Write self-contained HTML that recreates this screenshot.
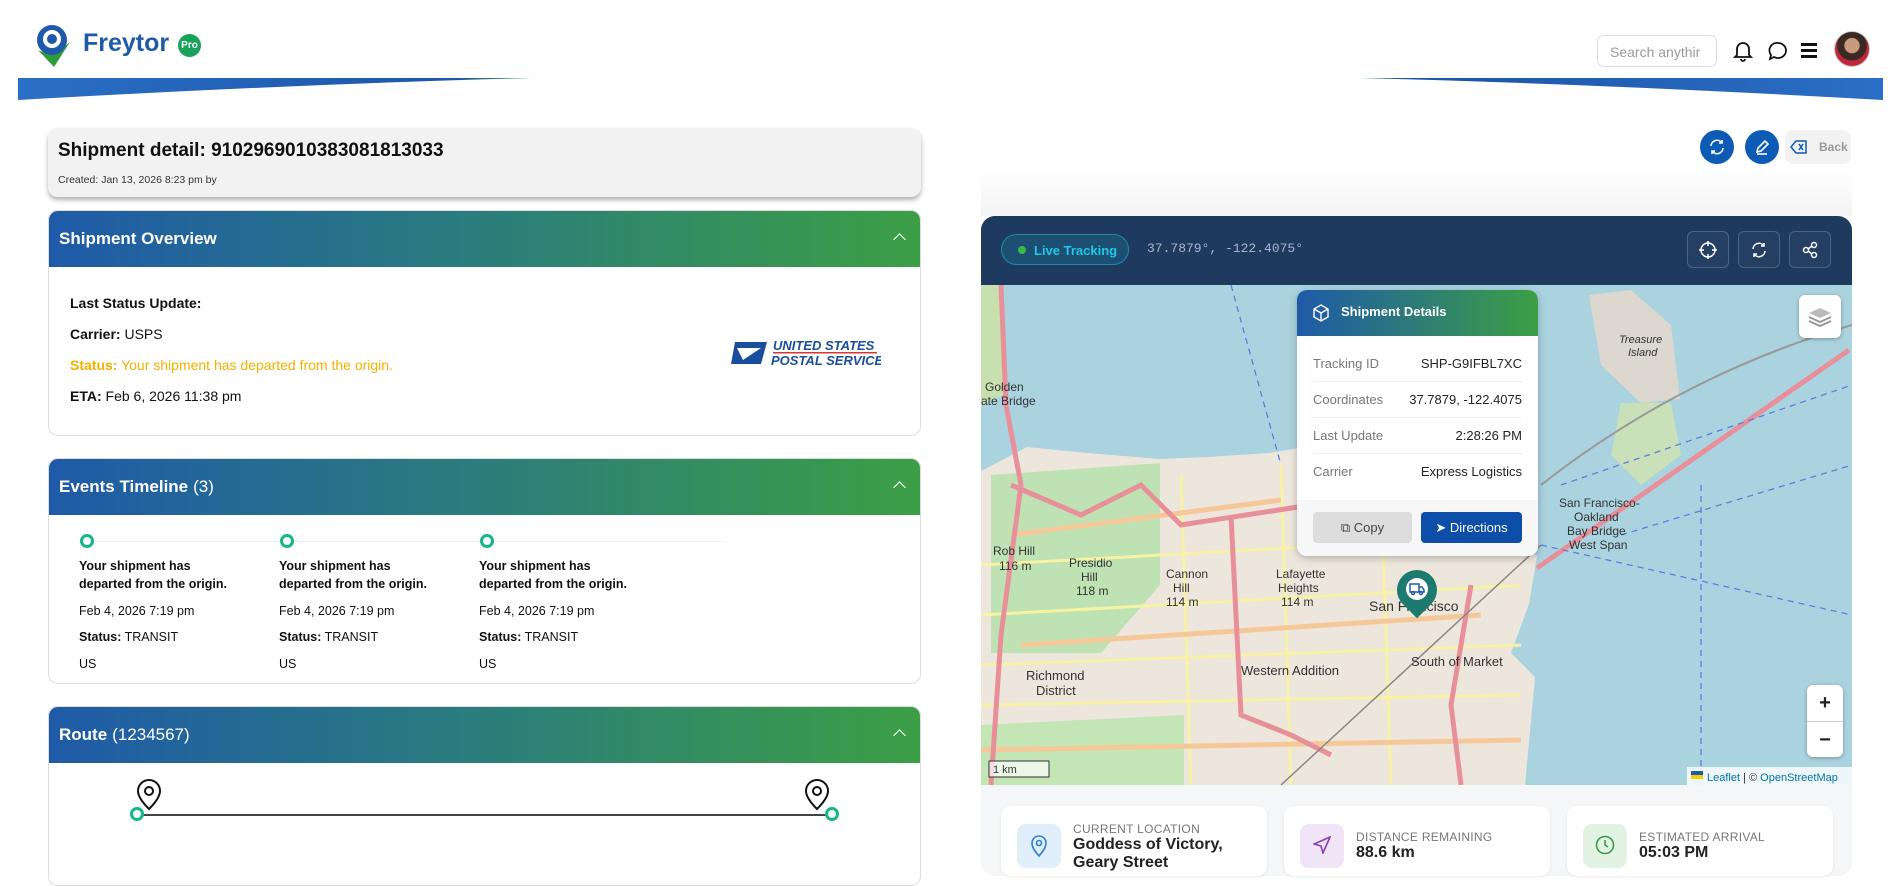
<!DOCTYPE html>
<html><head><meta charset="utf-8">
<style>
*{box-sizing:border-box;margin:0;padding:0}
body{width:1896px;height:866px;overflow:hidden;background:#fff;font-family:"Liberation Sans",sans-serif;color:#111;position:relative}
.abs{position:absolute}
.card{position:absolute;left:48px;width:873px;border:1px solid #ddd;border-radius:10px;background:#fff;overflow:hidden}
.hdr{height:56px;background:linear-gradient(90deg,#1f5aa8 0%,#2a7a80 45%,#3c9f45 100%);color:#fff;font-weight:bold;font-size:17px;padding:0 0 0 10px;display:flex;align-items:center;position:relative}
.hdr .chev{position:absolute;right:16px;top:24px;width:9px;height:9px;border-left:1.6px solid #fff;border-top:1.6px solid #fff;transform:rotate(45deg)}
.ov p{font-size:14px;margin-bottom:15px}
.ev{position:absolute;font-size:12.5px;line-height:18px;width:160px}
.ev b{font-weight:bold}
.dot{position:absolute;width:14px;height:14px;border:3px solid #12b886;border-radius:50%;background:#fff}
.hbtn{position:absolute;width:42px;height:37px;border:1px solid #4d6384;border-radius:6px;background:#253f63}
.stat{position:absolute;top:806px;width:266px;height:70px;background:#fff;border-radius:10px;box-shadow:0 1px 3px rgba(0,0,0,.08)}
.stat .ic{position:absolute;left:16px;top:18px;width:44px;height:44px;border-radius:9px}
.stat .lb{position:absolute;left:72px;font-size:12px;color:#777;letter-spacing:.3px}
.stat .vl{position:absolute;left:72px;font-size:16px;font-weight:bold;color:#222;line-height:18px}
</style></head><body>

<svg class="abs" style="left:32px;top:22px" width="42" height="46" viewBox="0 0 42 46">
<path d="M6 28 Q20 36 38 20 L22 45 Z" fill="#2e9c3a"/>
<circle cx="20" cy="18" r="15" fill="#1f5aa8"/><circle cx="20" cy="17" r="9" fill="#fff"/><circle cx="20" cy="17" r="5" fill="#1f5aa8"/>
</svg>
<div class="abs" style="left:83px;top:29px;font-size:25px;font-weight:bold;color:#1f5aa8">Freytor</div>
<div class="abs" style="left:178px;top:34px;width:23px;height:23px;border-radius:50%;background:#19a35a;color:#fff;font-size:10px;font-weight:bold;text-align:center;line-height:23px">Pro</div>

<svg class="abs" style="left:0;top:76px" width="1896" height="26">
<defs><linearGradient id="sw" x1="0" x2="1"><stop offset="0" stop-color="#2a6fc6"/><stop offset=".85" stop-color="#1e56a8"/><stop offset="1" stop-color="#3ea04a"/></linearGradient>
<linearGradient id="sw2" x1="1" x2="0"><stop offset="0" stop-color="#2a6fc6"/><stop offset=".85" stop-color="#1e56a8"/><stop offset="1" stop-color="#1e56a8"/></linearGradient></defs>
<path d="M18 2 L532 2 Q300 8 18 24 Z" fill="url(#sw)"/>
<path d="M1883 2 L1360 2 Q1600 8 1883 24 Z" fill="url(#sw2)"/>
</svg>

<div class="abs" style="left:1597px;top:35px;width:120px;height:32px;border:1px solid #ddd;border-radius:7px;color:#999;font-size:14px;padding:8px 12px;overflow:hidden;white-space:nowrap">Search anythir</div>
<svg class="abs" style="left:1733px;top:40px" width="20" height="22" viewBox="0 0 20 22" fill="none" stroke="#111" stroke-width="1.8"><path d="M4 15V9a6 6 0 0112 0v6l2 2H2z"/><path d="M8 19a2 2 0 004 0"/></svg>
<svg class="abs" style="left:1768px;top:41px" width="20" height="20" viewBox="0 0 20 20" fill="none" stroke="#111" stroke-width="1.8"><path d="M10 2a8 7.5 0 110 15 8 8 0 01-4-1l-4 2 1-4A7.5 7.5 0 0110 2z"/></svg>
<div class="abs" style="left:1801px;top:43px;width:16px;height:3px;background:#111;box-shadow:0 6px 0 #111,0 12px 0 #111"></div>
<div class="abs" style="left:1834px;top:31px;width:36px;height:36px;border-radius:50%;background:radial-gradient(circle at 50% 40%,#c79a7d 0 28%,#3a2a24 30% 55%,#c0273a 57%);border:1px solid #ccc"></div>

<div class="abs" style="left:48px;top:128px;width:873px;height:69px;background:#f2f2f2;border-radius:10px;box-shadow:0 3px 5px rgba(0,0,0,.3)">
<div class="abs" style="left:10px;top:12px;font-size:19px;font-weight:bold">Shipment detail: 9102969010383081813033</div>
<div class="abs" style="left:10px;top:46px;font-size:10.5px;color:#333">Created: Jan 13, 2026 8:23 pm by</div>
</div>

<div class="card" style="top:210px;height:226px">
<div class="hdr">Shipment Overview<span class="chev"></span></div>
<div class="ov abs" style="left:21px;top:84px">
<p><b>Last Status Update:</b></p>
<p><b>Carrier:</b> USPS</p>
<p style="color:#f5b000"><b>Status:</b> Your shipment has departed from the origin.</p>
<p><b>ETA:</b> Feb 6, 2026 11:38 pm</p>
</div>
<svg class="abs" style="left:682px;top:125px" width="150" height="32" viewBox="0 0 150 32">
<path d="M4 6 H36 L30 28 H0 Z" fill="#1a4e9c"/><path d="M6 12 H30 L12 24 Z" fill="#fff"/>
<text x="42" y="14" font-family="Liberation Sans" font-size="13" font-style="italic" font-weight="bold" fill="#1a4e9c">UNITED STATES</text>
<rect x="42" y="16" width="104" height="1.5" fill="#d33"/>
<text x="40" y="29" font-family="Liberation Sans" font-size="13" font-style="italic" font-weight="bold" fill="#1a4e9c">POSTAL SERVICE</text>
</svg>
</div>

<div class="card" style="top:458px;height:226px">
<div class="hdr">Events Timeline <span style="font-weight:normal;margin-left:5px">(3)</span><span class="chev"></span></div>
<div class="abs" style="left:36px;top:82px;width:640px;height:1px;background:#eee"></div>
<div class="dot" style="left:31px;top:75px"></div>
<div class="dot" style="left:231px;top:75px"></div>
<div class="dot" style="left:431px;top:75px"></div>
<div class="ev" style="left:30px;top:98px"><b>Your shipment has departed from the origin.</b><div style="margin-top:9px">Feb 4, 2026 7:19 pm</div><div style="margin-top:8px"><b>Status:</b> TRANSIT</div><div style="margin-top:9px">US</div></div>
<div class="ev" style="left:230px;top:98px"><b>Your shipment has departed from the origin.</b><div style="margin-top:9px">Feb 4, 2026 7:19 pm</div><div style="margin-top:8px"><b>Status:</b> TRANSIT</div><div style="margin-top:9px">US</div></div>
<div class="ev" style="left:430px;top:98px"><b>Your shipment has departed from the origin.</b><div style="margin-top:9px">Feb 4, 2026 7:19 pm</div><div style="margin-top:8px"><b>Status:</b> TRANSIT</div><div style="margin-top:9px">US</div></div>
</div>

<div class="card" style="top:706px;height:180px">
<div class="hdr">Route <span style="font-weight:normal;margin-left:5px">(1234567)</span><span class="chev"></span></div>
<div class="abs" style="left:88px;top:107px;width:692px;height:1.5px;background:#444"></div>
<div class="dot" style="left:81px;top:100px"></div>
<div class="dot" style="left:776px;top:100px"></div>
<svg class="abs" style="left:86px;top:72px" width="28" height="32" viewBox="0 0 28 32" fill="none" stroke="#111" stroke-width="2"><path d="M14 30 C4 20 3 15 3 12 a11 11 0 0122 0c0 3-1 8-11 18z"/><circle cx="14" cy="12" r="4"/></svg>
<svg class="abs" style="left:754px;top:72px" width="28" height="32" viewBox="0 0 28 32" fill="none" stroke="#111" stroke-width="2"><path d="M14 30 C4 20 3 15 3 12 a11 11 0 0122 0c0 3-1 8-11 18z"/><circle cx="14" cy="12" r="4"/></svg>
</div>

<div class="abs" style="left:1700px;top:130px;width:34px;height:34px;border-radius:50%;background:#0d5bb5"></div>
<svg class="abs" style="left:1708px;top:138px" width="18" height="18" viewBox="0 0 18 18" fill="none" stroke="#fff" stroke-width="1.6"><path d="M3 8a6 6 0 0111-3M15 10a6 6 0 01-11 3"/><path d="M14 2v3h-3M4 16v-3h3"/></svg>
<div class="abs" style="left:1745px;top:130px;width:34px;height:34px;border-radius:50%;background:#0d5bb5"></div>
<svg class="abs" style="left:1754px;top:139px" width="16" height="16" viewBox="0 0 16 16" fill="none" stroke="#fff" stroke-width="1.6"><path d="M3 13l1-4 7-7 3 3-7 7z"/><path d="M3 15h10"/></svg>
<div class="abs" style="left:1785px;top:130px;width:66px;height:34px;border-radius:8px;background:#f2f2f2;color:#999;font-size:12px;font-weight:bold;padding:10px 0 0 34px">Back</div>
<svg class="abs" style="left:1790px;top:139px" width="18" height="16" viewBox="0 0 18 16" fill="none" stroke="#0d5bb5" stroke-width="1.5"><path d="M6 2h10v12H6L1 8z"/><path d="M9 5l4 6M13 5l-4 6"/></svg>

<div class="abs" style="left:981px;top:170px;width:871px;height:46px;background:linear-gradient(#fff,#f3f3f3)"></div>

<div class="abs" style="left:981px;top:216px;width:871px;height:660px;border-radius:14px;overflow:hidden;background:#f5f6f8">
<div class="abs" style="left:0;top:0;width:871px;height:69px;background:#1f3a5f"></div>
<div class="abs" style="left:20px;top:18px;width:128px;height:31px;border:1px solid #1e88a8;border-radius:16px;background:#1d4f72;color:#22c6e8;font-size:13px;font-weight:bold;padding:8px 0 0 32px">Live Tracking</div>
<div class="abs" style="left:37px;top:30px;width:8px;height:8px;border-radius:50%;background:#3bb54a"></div>
<div class="abs" style="left:166px;top:25px;font-family:'Liberation Mono',monospace;font-size:13px;color:#a9b6c6">37.7879°, -122.4075°</div>
<div class="hbtn" style="left:706px;top:15px"></div>
<div class="hbtn" style="left:757px;top:15px"></div>
<div class="hbtn" style="left:808px;top:15px"></div>
<svg class="abs" style="left:718px;top:25px" width="18" height="18" viewBox="0 0 18 18" fill="none" stroke="#fff" stroke-width="1.5"><circle cx="9" cy="9" r="7"/><path d="M9 0v5M9 13v5M0 9h5M13 9h5"/></svg>
<svg class="abs" style="left:769px;top:25px" width="18" height="18" viewBox="0 0 18 18" fill="none" stroke="#fff" stroke-width="1.5"><path d="M3 8a6 6 0 0111-3M15 10a6 6 0 01-11 3"/><path d="M14 2v3h-3M4 16v-3h3"/></svg>
<svg class="abs" style="left:820px;top:25px" width="18" height="18" viewBox="0 0 18 18" fill="none" stroke="#fff" stroke-width="1.5"><circle cx="13" cy="4" r="2.5"/><circle cx="5" cy="9" r="2.5"/><circle cx="13" cy="14" r="2.5"/><path d="M7 8l4-3M7 10l4 3"/></svg>

<svg class="abs" style="left:0;top:69px" width="871" height="500" viewBox="0 0 871 500">
<rect width="871" height="500" fill="#aad3df"/>
<path d="M0 186 L46 162 L106 168 L179 174 L227 172 L288 168 L324 162 L556 271 L548 319 L530 368 L554 392 L544 500 L0 500 Z" fill="#ece6dc"/>
<path d="M10 190 L179 178 L179 300 L120 368 L10 368 Z" fill="#bfe2b4"/>
<path d="M0 440 L203 430 L203 500 L0 500 Z" fill="#c4e5b6"/>
<path d="M0 0 L20 0 L22 110 L0 120 Z" fill="#c8dfb0"/>
<path d="M608 10 L650 5 L690 40 L699 114 L660 118 L620 80 Z" fill="#ddd8cf"/>
<path d="M640 118 L690 118 L700 170 L660 200 L630 170 Z" fill="#c9e0b8"/>
<g stroke="#f7f2a6" stroke-width="3" fill="none">
<path d="M0 280 L540 250"/><path d="M0 330 L540 300"/><path d="M0 380 L540 360"/><path d="M0 420 L540 410"/>
<path d="M200 190 L210 500"/><path d="M300 180 L310 500"/><path d="M400 200 L410 500"/>
</g>
<g stroke="#f5c89a" stroke-width="5" fill="none">
<path d="M0 465 L540 455"/><path d="M40 360 L500 330"/><path d="M30 250 L300 215"/>
</g>
<g stroke="#e8909a" stroke-width="5" fill="none">
<path d="M20 0 L25 120 L40 200 L20 350 L10 500"/>
<path d="M30 200 L100 230 L160 200 L200 240 L330 220"/>
<path d="M250 230 L260 430 L310 450 L350 470"/>
<path d="M556 283 L868 65"/>
<path d="M490 300 L470 420 L480 500"/>
</g>
<path d="M300 500 L560 260" stroke="#888" stroke-width="1.5"/>
<g stroke="#5b7fe0" stroke-width="1.3" stroke-dasharray="6 5" fill="none">
<path d="M250 0 L300 180"/><path d="M580 200 L871 100"/><path d="M560 260 L871 330"/><path d="M720 200 L720 500"/><path d="M640 250 L871 180"/>
</g>
<path d="M560 200 Q700 90 871 40" stroke="#999" stroke-width="2" fill="none"/>
<g font-family="Liberation Sans" font-size="12" fill="#333">
<text x="4" y="106">Golden</text><text x="0" y="120">ate Bridge</text>
<text x="12" y="270">Rob Hill</text><text x="18" y="285">116 m</text>
<text x="45" y="395" font-size="13">Richmond</text><text x="55" y="410" font-size="13">District</text>
<text x="260" y="390" font-size="13">Western Addition</text>
<text x="388" y="326" font-size="14">San Francisco</text>
<text x="430" y="381" font-size="13">South of Market</text>
<text x="578" y="222">San Francisco-</text><text x="593" y="236">Oakland</text><text x="586" y="250">Bay Bridge</text><text x="588" y="264">West Span</text>
<text x="638" y="58" font-style="italic" font-size="11">Treasure</text><text x="647" y="71" font-style="italic" font-size="11">Island</text>
<text x="185" y="293">Cannon</text><text x="192" y="307">Hill</text><text x="185" y="321">114 m</text>
<text x="295" y="293">Lafayette</text><text x="297" y="307">Heights</text><text x="300" y="321">114 m</text>
<text x="88" y="282">Presidio</text><text x="100" y="296">Hill</text><text x="95" y="310">118 m</text>
</g>
<rect x="8" y="476" width="60" height="16" fill="rgba(255,255,255,.7)" stroke="#333"/>
<text x="12" y="488" font-family="Liberation Sans" font-size="11" fill="#333">1 km</text>
<rect x="706" y="482" width="165" height="18" fill="rgba(255,255,255,.8)"/>
<rect x="710" y="486" width="12" height="8" fill="#1f5aa8"/><rect x="710" y="490" width="12" height="4" fill="#f5d000"/>
<text x="726" y="496" font-family="Liberation Sans" font-size="11" fill="#0078a8">Leaflet <tspan fill="#333">| ©</tspan> OpenStreetMap</text>
</svg>

<div class="abs" style="left:818px;top:79px;width:42px;height:43px;background:#fff;border-radius:6px;box-shadow:0 1px 4px rgba(0,0,0,.3)"></div>
<svg class="abs" style="left:826px;top:88px" width="26" height="26" viewBox="0 0 26 26"><path d="M13 14 L2 9 L13 4 L24 9Z" fill="#bbb"/><path d="M2 13 L13 18 L24 13" fill="none" stroke="#999" stroke-width="2"/><path d="M2 17 L13 22 L24 17" fill="none" stroke="#999" stroke-width="2"/></svg>
<div class="abs" style="left:826px;top:469px;width:36px;height:72px;background:#fff;border-radius:6px;box-shadow:0 1px 4px rgba(0,0,0,.3);font-size:20px;font-weight:bold;text-align:center;line-height:36px;color:#222">+<div style="border-top:1px solid #ccc">−</div></div>

<div class="abs" style="left:316px;top:74px;width:241px;height:266px;background:#fff;border-radius:10px;box-shadow:0 2px 8px rgba(0,0,0,.25);overflow:hidden">
<div style="height:46px;background:linear-gradient(90deg,#1f5aa8,#3c9f45);color:#fff;font-size:13px;font-weight:bold;padding:14px 0 0 44px">Shipment Details</div>
<svg class="abs" style="left:15px;top:14px" width="18" height="18" viewBox="0 0 18 18" fill="none" stroke="#fff" stroke-width="1.4"><path d="M9 1l7 4v8l-7 4-7-4V5z"/><path d="M2 5l7 4 7-4M9 9v8"/></svg>
<div style="font-size:13px;color:#777;padding:10px 16px 0 16px;line-height:35px">
<div style="border-bottom:1px solid #eee">Tracking ID<span style="float:right;color:#222">SHP-G9IFBL7XC</span></div>
<div style="border-bottom:1px solid #eee">Coordinates<span style="float:right;color:#222">37.7879, -122.4075</span></div>
<div style="border-bottom:1px solid #eee">Last Update<span style="float:right;color:#222">2:28:26 PM</span></div>
<div>Carrier<span style="float:right;color:#222">Express Logistics</span></div>
</div>
<div class="abs" style="left:0;top:210px;width:241px;height:56px;background:#f7f7f7"></div>
<div class="abs" style="left:16px;top:222px;width:99px;height:31px;background:#ddd;border-radius:4px;font-size:13px;color:#444;text-align:center;line-height:31px">⧉ Copy</div>
<div class="abs" style="left:124px;top:222px;width:101px;height:31px;background:#0d4fa8;border-radius:4px;font-size:13px;color:#fff;text-align:center;line-height:31px">➤ Directions</div>
</div>
<div class="abs" style="left:416px;top:354px;width:40px;height:40px;border-radius:50% 50% 50% 0;transform:rotate(-45deg);background:#1d7a6e"></div>
<div class="abs" style="left:425px;top:362px;width:22px;height:22px;border-radius:50%;background:#fff"></div>
<svg class="abs" style="left:428px;top:366px" width="16" height="14" viewBox="0 0 16 14" fill="none" stroke="#1f5aa8" stroke-width="1.5"><path d="M1 2h9v8H1zM10 5h3l2 3v2h-5"/><circle cx="4" cy="11" r="1.5"/><circle cx="12" cy="11" r="1.5"/></svg>
</div>

<div class="stat" style="left:1001px"><div class="ic" style="background:#e1effc"></div>
<svg class="abs" style="left:28px;top:29px" width="20" height="22" viewBox="0 0 20 22" fill="none" stroke="#2d7fd0" stroke-width="1.6"><path d="M10 21C3 13 3 10 3 8a7 7 0 0114 0c0 2 0 5-7 13z"/><circle cx="10" cy="8" r="2.5"/></svg>
<div class="lb" style="top:16px">CURRENT LOCATION</div><div class="vl" style="top:30px">Goddess of Victory,<br>Geary Street</div></div>
<div class="stat" style="left:1284px"><div class="ic" style="background:#f0e4f7"></div>
<svg class="abs" style="left:29px;top:30px" width="18" height="18" viewBox="0 0 18 18" fill="none" stroke="#8a3fb0" stroke-width="1.6"><path d="M17 1L1 8l7 2 2 7z"/></svg>
<div class="lb" style="top:24px">DISTANCE REMAINING</div><div class="vl" style="top:38px">88.6 km</div></div>
<div class="stat" style="left:1567px"><div class="ic" style="background:#e3f3e3"></div>
<svg class="abs" style="left:28px;top:29px" width="20" height="20" viewBox="0 0 20 20" fill="none" stroke="#3a9a4a" stroke-width="1.6"><circle cx="10" cy="10" r="8.5"/><path d="M10 5v5l3 2"/></svg>
<div class="lb" style="top:24px">ESTIMATED ARRIVAL</div><div class="vl" style="top:38px">05:03 PM</div></div>

</body></html>
